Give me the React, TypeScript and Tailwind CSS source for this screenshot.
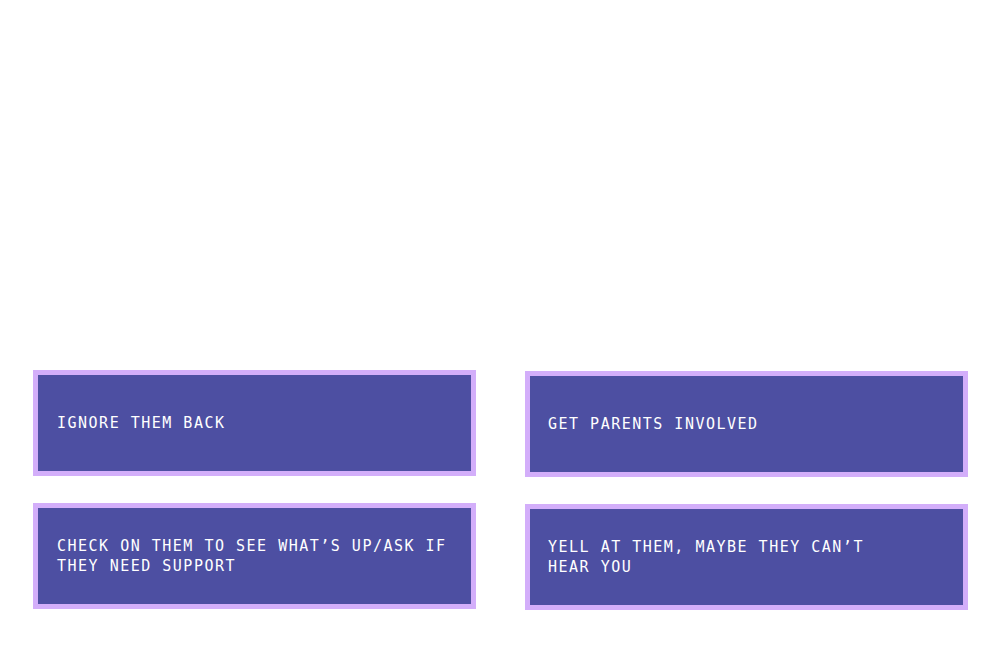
import React from "react";

function Card({ children, shift }: { children: React.ReactNode; shift?: boolean }) {
  return (
    <div
      className={
        "h-[106px] border-[5px] border-[#d3aefa] bg-[#4d4fa2] flex items-center pr-4 " +
        (shift ? "mt-px pl-[18px]" : "pl-[19px]")
      }
    >
      <p
        className="text-white text-[15px] leading-[20px] tracking-[1.5px] uppercase"
        style={{ fontFamily: '"DejaVu Sans Mono", monospace' }}
      >
        {children}
      </p>
    </div>
  );
}

export default function App() {
  return (
    <div className="w-[1000px] h-[650px] bg-white overflow-hidden">
      <div className="pt-[370px] pl-[33px] grid grid-cols-[443px_443px] gap-x-[49px] gap-y-[26px]">
        <Card>IGNORE THEM BACK</Card>
        <Card shift>GET PARENTS INVOLVED</Card>
        <Card>CHECK ON THEM TO SEE WHAT’S UP/ASK IF THEY NEED SUPPORT</Card>
        <Card shift>
          YELL AT THEM, MAYBE THEY CAN’T
          <br />
          HEAR YOU
        </Card>
      </div>
    </div>
  );
}
